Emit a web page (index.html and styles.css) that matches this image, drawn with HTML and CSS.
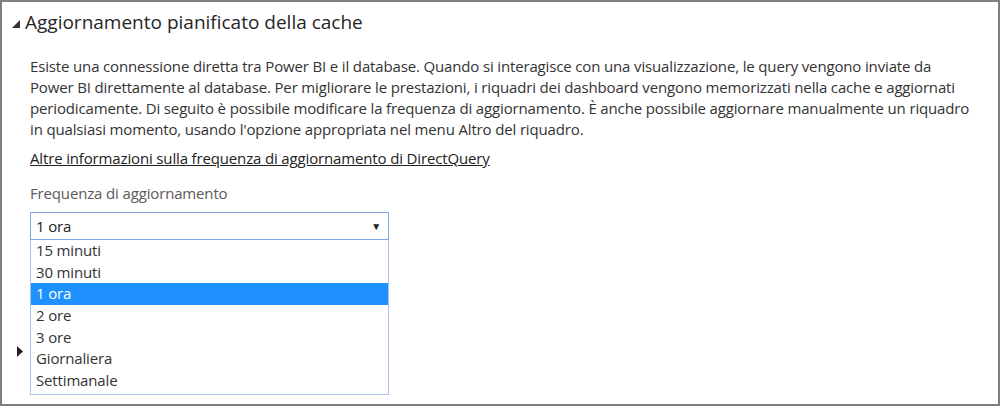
FILE: index.html
```html
<!DOCTYPE html>
<html lang="it">
<head>
<meta charset="utf-8">
<title>Aggiornamento pianificato della cache</title>
<link rel="stylesheet" href="styles.css">
</head>
<body>
<div class="panel">
  <div class="section-header">
    <svg class="tri-open" width="8" height="8" viewBox="0 0 8 8"><polygon points="8,0 8,8 0,8" fill="#333"/></svg>
    <h2 class="section-title">Aggiornamento pianificato della cache</h2>
  </div>
  <div class="section-body">
    <p class="desc">Esiste una connessione diretta tra Power BI e il database. Quando si interagisce con una visualizzazione, le query vengono inviate da Power BI direttamente al database. Per migliorare le prestazioni, i riquadri dei dashboard vengono memorizzati nella cache e aggiornati periodicamente. Di seguito è possibile modificare la frequenza di aggiornamento. È anche possibile aggiornare manualmente un riquadro in qualsiasi momento, usando l'opzione appropriata nel menu Altro del riquadro.</p>
    <a class="more-link" href="#">Altre informazioni sulla frequenza di aggiornamento di DirectQuery</a>
    <div class="field-label">Frequenza di aggiornamento</div>
    <div class="select-wrap">
      <div class="select-box">
        <span>1 ora</span>
        <span class="arrow">&#9660;</span>
      </div>
      <ul class="options">
        <li>15 minuti</li>
        <li>30 minuti</li>
        <li class="selected">1 ora</li>
        <li>2 ore</li>
        <li>3 ore</li>
        <li>Giornaliera</li>
        <li>Settimanale</li>
      </ul>
    </div>
  </div>
  <div class="section-header collapsed">
    <svg class="tri-closed" width="6" height="11" viewBox="0 0 6 11"><polygon points="0,0 6,5.5 0,11" fill="#222"/></svg>
  </div>
</div>
</body>
</html>
```

FILE: styles.css
```css
html, body {
  margin: 0;
  padding: 0;
  background: #ffffff;
}

body {
  font-family: "Open Sans", "Noto Sans", sans-serif;
  color: #333333;
}

.panel {
  box-sizing: border-box;
  width: 1000px;
  height: 406px;
  border: 2px solid #808080;
  background: #ffffff;
  overflow: hidden;
}

.section-header {
  display: flex;
  align-items: center;
  padding: 6px 0 0 10px;
  height: 28px;
}

.tri-open {
  margin-top: 3px;
  margin-right: 5px;
}

.section-title {
  margin: 0;
  font-size: 19px;
  font-weight: 400;
  color: #262626;
}

.section-body {
  padding: 20px 28px 0 28px;
}

.desc {
  margin: 0;
  font-size: 15px;
  line-height: 21px;
  color: #333333;
  width: 942px;
  letter-spacing: -0.15px;
}

.more-link {
  display: inline-block;
  margin-top: 8px;
  font-size: 15px;
  line-height: 21px;
  color: #222222;
  text-decoration: underline;
  letter-spacing: -0.15px;
}

.field-label {
  margin-top: 14px;
  font-size: 15px;
  line-height: 21px;
  color: #5a5a5a;
  letter-spacing: -0.15px;
}

.select-wrap {
  position: relative;
  margin-top: 8px;
  width: 359px;
}

.select-box {
  box-sizing: border-box;
  height: 28px;
  border: 1px solid #7aa9e6;
  display: flex;
  align-items: center;
  justify-content: space-between;
  padding: 0 7px 0 5px;
  font-size: 15px;
  letter-spacing: -0.15px;
  color: #222222;
}

.arrow {
  font-size: 10px;
  color: #222222;
}

.options {
  position: absolute;
  left: 0;
  top: 28px;
  box-sizing: border-box;
  width: 359px;
  margin: 0;
  padding: 0 0 2px 0;
  list-style: none;
  background: #ffffff;
  border: 1px solid #a9c4ea;
  border-top: none;
  z-index: 2;
}

.options li {
  height: 21.67px;
  line-height: 21.67px;
  padding-left: 5px;
  font-size: 15px;
  letter-spacing: -0.15px;
  color: #333333;
}

.options li.selected {
  background: #1e90ff;
  color: #ffffff;
}

.section-header.collapsed {
  padding: 0 0 0 15px;
  margin-top: 104px;
  height: 14px;
}
```
